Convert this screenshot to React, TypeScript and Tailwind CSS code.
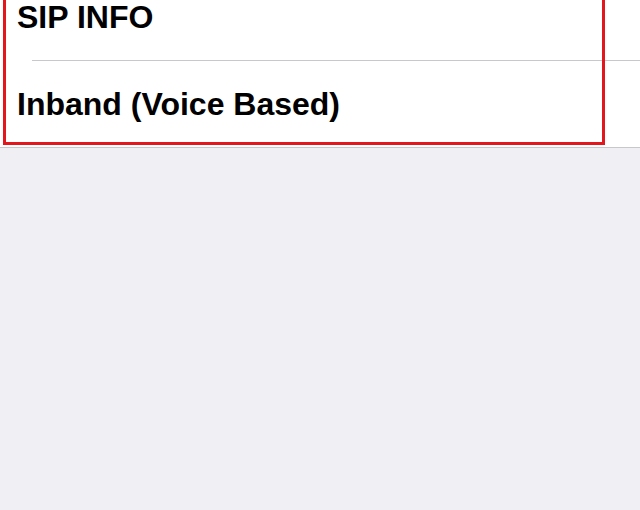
import React from 'react';

export default function App() {
  return (
    <div className="relative h-[510px] w-[640px] overflow-hidden bg-[#efeff4] font-['Liberation_Sans',Arial,sans-serif]">
      <div className="mt-[-27px] border-b border-[#c8c7cc] bg-white">
        <div className="flex h-[87px] items-center pl-[17px]">
          <span className="text-[32px] font-bold text-black">SIP INFO</span>
        </div>
        <div className="ml-[32px] h-px bg-[#c8c7cc]" />
        <div className="flex h-[86px] items-center pl-[17px]">
          <span className="text-[32px] font-bold text-black">Inband (Voice Based)</span>
        </div>
      </div>
      <div className="absolute left-[3px] top-[-10px] h-[155px] w-[602px] border-[3px] border-[#e3161e]" />
    </div>
  );
}
